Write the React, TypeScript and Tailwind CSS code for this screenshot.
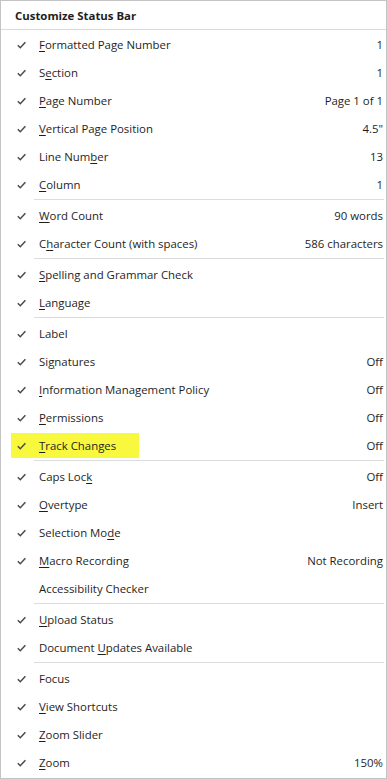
import React from 'react'

type Item = {
  label: string
  key?: number // index of underlined letter
  value?: string
  checked?: boolean
  highlight?: boolean
}

// groups separated by a thin rule
const groups: Item[][] = [
  [
    { label: 'Formatted Page Number', key: 0, value: '1', checked: true },
    { label: 'Section', key: 1, value: '1', checked: true },
    { label: 'Page Number', key: 0, value: 'Page 1 of 1', checked: true },
    { label: 'Vertical Page Position', key: 0, value: '4.5"', checked: true },
    { label: 'Line Number', key: 8, value: '13', checked: true },
    { label: 'Column', key: 0, value: '1', checked: true },
  ],
  [
    { label: 'Word Count', key: 0, value: '90 words', checked: true },
    { label: 'Character Count (with spaces)', key: 1, value: '586 characters', checked: true },
  ],
  [
    { label: 'Spelling and Grammar Check', key: 0, checked: true },
    { label: 'Language', key: 0, checked: true },
  ],
  [
    { label: 'Label', checked: true },
    { label: 'Signatures', key: 2, value: 'Off', checked: true },
    { label: 'Information Management Policy', key: 0, value: 'Off', checked: true },
    { label: 'Permissions', key: 0, value: 'Off', checked: true },
    { label: 'Track Changes', key: 0, value: 'Off', checked: true, highlight: true },
  ],
  [
    { label: 'Caps Lock', key: 8, value: 'Off', checked: true },
    { label: 'Overtype', key: 0, value: 'Insert', checked: true },
    { label: 'Selection Mode', key: 12, checked: true },
    { label: 'Macro Recording', key: 0, value: 'Not Recording', checked: true },
    { label: 'Accessibility Checker' },
  ],
  [
    { label: 'Upload Status', key: 0, checked: true },
    { label: 'Document Updates Available', key: 9, checked: true },
  ],
  [
    { label: 'Focus', checked: true },
    { label: 'View Shortcuts', key: 0, checked: true },
    { label: 'Zoom Slider', key: 0, checked: true },
    { label: 'Zoom', key: 0, value: '150%', checked: true },
  ],
]

function Check() {
  return (
    <svg width="9" height="8" viewBox="0 0 9 8" className="text-[#4a4a4a]">
      <polyline points="0.8,4.2 3.3,6.7 8.4,1.2" fill="none" stroke="currentColor" strokeWidth="1.5" />
    </svg>
  )
}

function Label({ text, k }: { text: string; k?: number }) {
  if (k === undefined) return <span>{text}</span>
  return (
    <span>
      {text.slice(0, k)}
      <span className="underline underline-offset-2">{text[k]}</span>
      {text.slice(k + 1)}
    </span>
  )
}

function Row({ item }: { item: Item }) {
  return (
    <div className="flex items-center h-[28px]">
      <div
        className={
          'flex items-center h-[25px] ml-[10px] mt-[1px] ' +
          (item.highlight ? 'w-[128px] bg-[#f8f83e]' : '')
        }
      >
        <div className="w-[28px] flex pl-[6px]">{item.checked && <Check />}</div>
        <Label text={item.label} k={item.key} />
      </div>
      {item.value && <span className="ml-auto pr-[3px] mt-[1px]">{item.value}</span>}
    </div>
  )
}

export default function App() {
  return (
    <div
      className="w-[387px] h-[779px] bg-white border border-[#c4c4c4] text-[11.4px] text-[#1e1e1e] overflow-hidden"
      style={{ fontFamily: '"Open Sans", "Noto Sans", sans-serif' }}
    >
      <div className="h-[29px] flex items-center px-[14px] pt-[1px] border-b border-[#dadada] font-bold">
        Customize Status Bar
      </div>
      {groups.map((g, gi) => (
        <div key={gi}>
          {gi > 0 && (
            <div className="h-[3px] flex items-center pl-[33px] pr-[2px]">
              <div className="h-px flex-1 bg-[#dcdcdc]" />
            </div>
          )}
          {g.map(it => (
            <Row key={it.label} item={it} />
          ))}
        </div>
      ))}
    </div>
  )
}
